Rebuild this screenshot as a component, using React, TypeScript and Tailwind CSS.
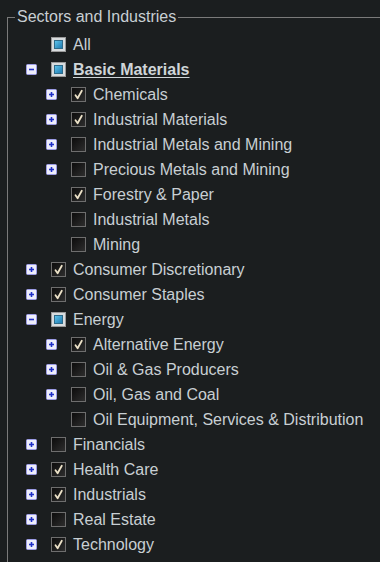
import React from 'react';

type State = 'checked' | 'unchecked' | 'partial';
type Row = { level: number; label: string; exp?: 'plus' | 'minus'; state: State; bold?: boolean };

const rows: Row[] = [
  { level: 0, label: 'All', state: 'partial' },
  { level: 0, label: 'Basic Materials', exp: 'minus', state: 'partial', bold: true },
  { level: 1, label: 'Chemicals', exp: 'plus', state: 'checked' },
  { level: 1, label: 'Industrial Materials', exp: 'plus', state: 'checked' },
  { level: 1, label: 'Industrial Metals and Mining', exp: 'plus', state: 'unchecked' },
  { level: 1, label: 'Precious Metals and Mining', exp: 'plus', state: 'unchecked' },
  { level: 1, label: 'Forestry & Paper', state: 'checked' },
  { level: 1, label: 'Industrial Metals', state: 'unchecked' },
  { level: 1, label: 'Mining', state: 'unchecked' },
  { level: 0, label: 'Consumer Discretionary', exp: 'plus', state: 'checked' },
  { level: 0, label: 'Consumer Staples', exp: 'plus', state: 'checked' },
  { level: 0, label: 'Energy', exp: 'minus', state: 'partial' },
  { level: 1, label: 'Alternative Energy', exp: 'plus', state: 'checked' },
  { level: 1, label: 'Oil & Gas Producers', exp: 'plus', state: 'unchecked' },
  { level: 1, label: 'Oil, Gas and Coal', exp: 'plus', state: 'unchecked' },
  { level: 1, label: 'Oil Equipment, Services & Distribution', state: 'unchecked' },
  { level: 0, label: 'Financials', exp: 'plus', state: 'unchecked' },
  { level: 0, label: 'Health Care', exp: 'plus', state: 'checked' },
  { level: 0, label: 'Industrials', exp: 'plus', state: 'checked' },
  { level: 0, label: 'Real Estate', exp: 'plus', state: 'unchecked' },
  { level: 0, label: 'Technology', exp: 'plus', state: 'checked' },
];

function Expander({ kind }: { kind: 'plus' | 'minus' }) {
  return (
    <svg width="11" height="11" viewBox="0 0 11 11">
      <rect x="0.5" y="0.5" width="10" height="10" rx="1" fill="#eeeefb" stroke="#9c9ce6" />
      <path d="M3 5.5H8" stroke="#1f2fc8" strokeWidth="1.6" />
      {kind === 'plus' && <path d="M5.5 3V8" stroke="#1f2fc8" strokeWidth="1.6" />}
    </svg>
  );
}

function Check({ state }: { state: State }) {
  if (state === 'partial') {
    return (
      <div className="w-[15px] h-[15px] border border-[#9a9a9a] bg-[#d8dcde] p-[2px]">
        <div className="w-full h-full border border-[#2f6a88] bg-gradient-to-br from-[#5ec3ea] to-[#1d7bb0]" />
      </div>
    );
  }
  return (
    <div className="w-[15px] h-[15px] border border-[#6e6e6e] bg-gradient-to-br from-[#0c0c0c] to-[#2e2e2e] flex items-center justify-center">
      {state === 'checked' && (
        <svg width="11" height="11" viewBox="0 0 11 11">
          <path d="M2.5 6.2L4.6 9.2L8.8 1.8" fill="none" stroke="#ece2c8" strokeWidth="1.8" strokeLinecap="round" strokeLinejoin="round" />
        </svg>
      )}
    </div>
  );
}

export default function App() {
  return (
    <div className="h-[562px] overflow-hidden bg-[#1b1e1f] pt-[8px] pl-[7px] font-['Liberation_Sans',Arial,sans-serif] text-[#c8cfd3]">
      <fieldset className="border border-r-0 border-[#7a7a7a] m-0 p-0 pb-[12px]">
        <legend className="ml-[7px] px-[2px] text-[16px] leading-[18px] text-[#c8cfd3]">Sectors and Industries</legend>
        <ul className="mt-[6px]">
          {rows.map((r) => (
            <li
              key={r.label}
              className={`flex items-center h-[25px] ${r.level === 1 ? 'pl-[38px]' : 'pl-[18px]'}`}
            >
              <div className="w-[25px] flex items-center">{r.exp && <Expander kind={r.exp} />}</div>
              <Check state={r.state} />
              <span
                className={`ml-[7px] text-[16px] whitespace-nowrap ${r.bold ? 'font-bold underline underline-offset-2 text-[#cfd5d8]' : ''}`}
              >
                {r.label}
              </span>
            </li>
          ))}
        </ul>
      </fieldset>
    </div>
  );
}
